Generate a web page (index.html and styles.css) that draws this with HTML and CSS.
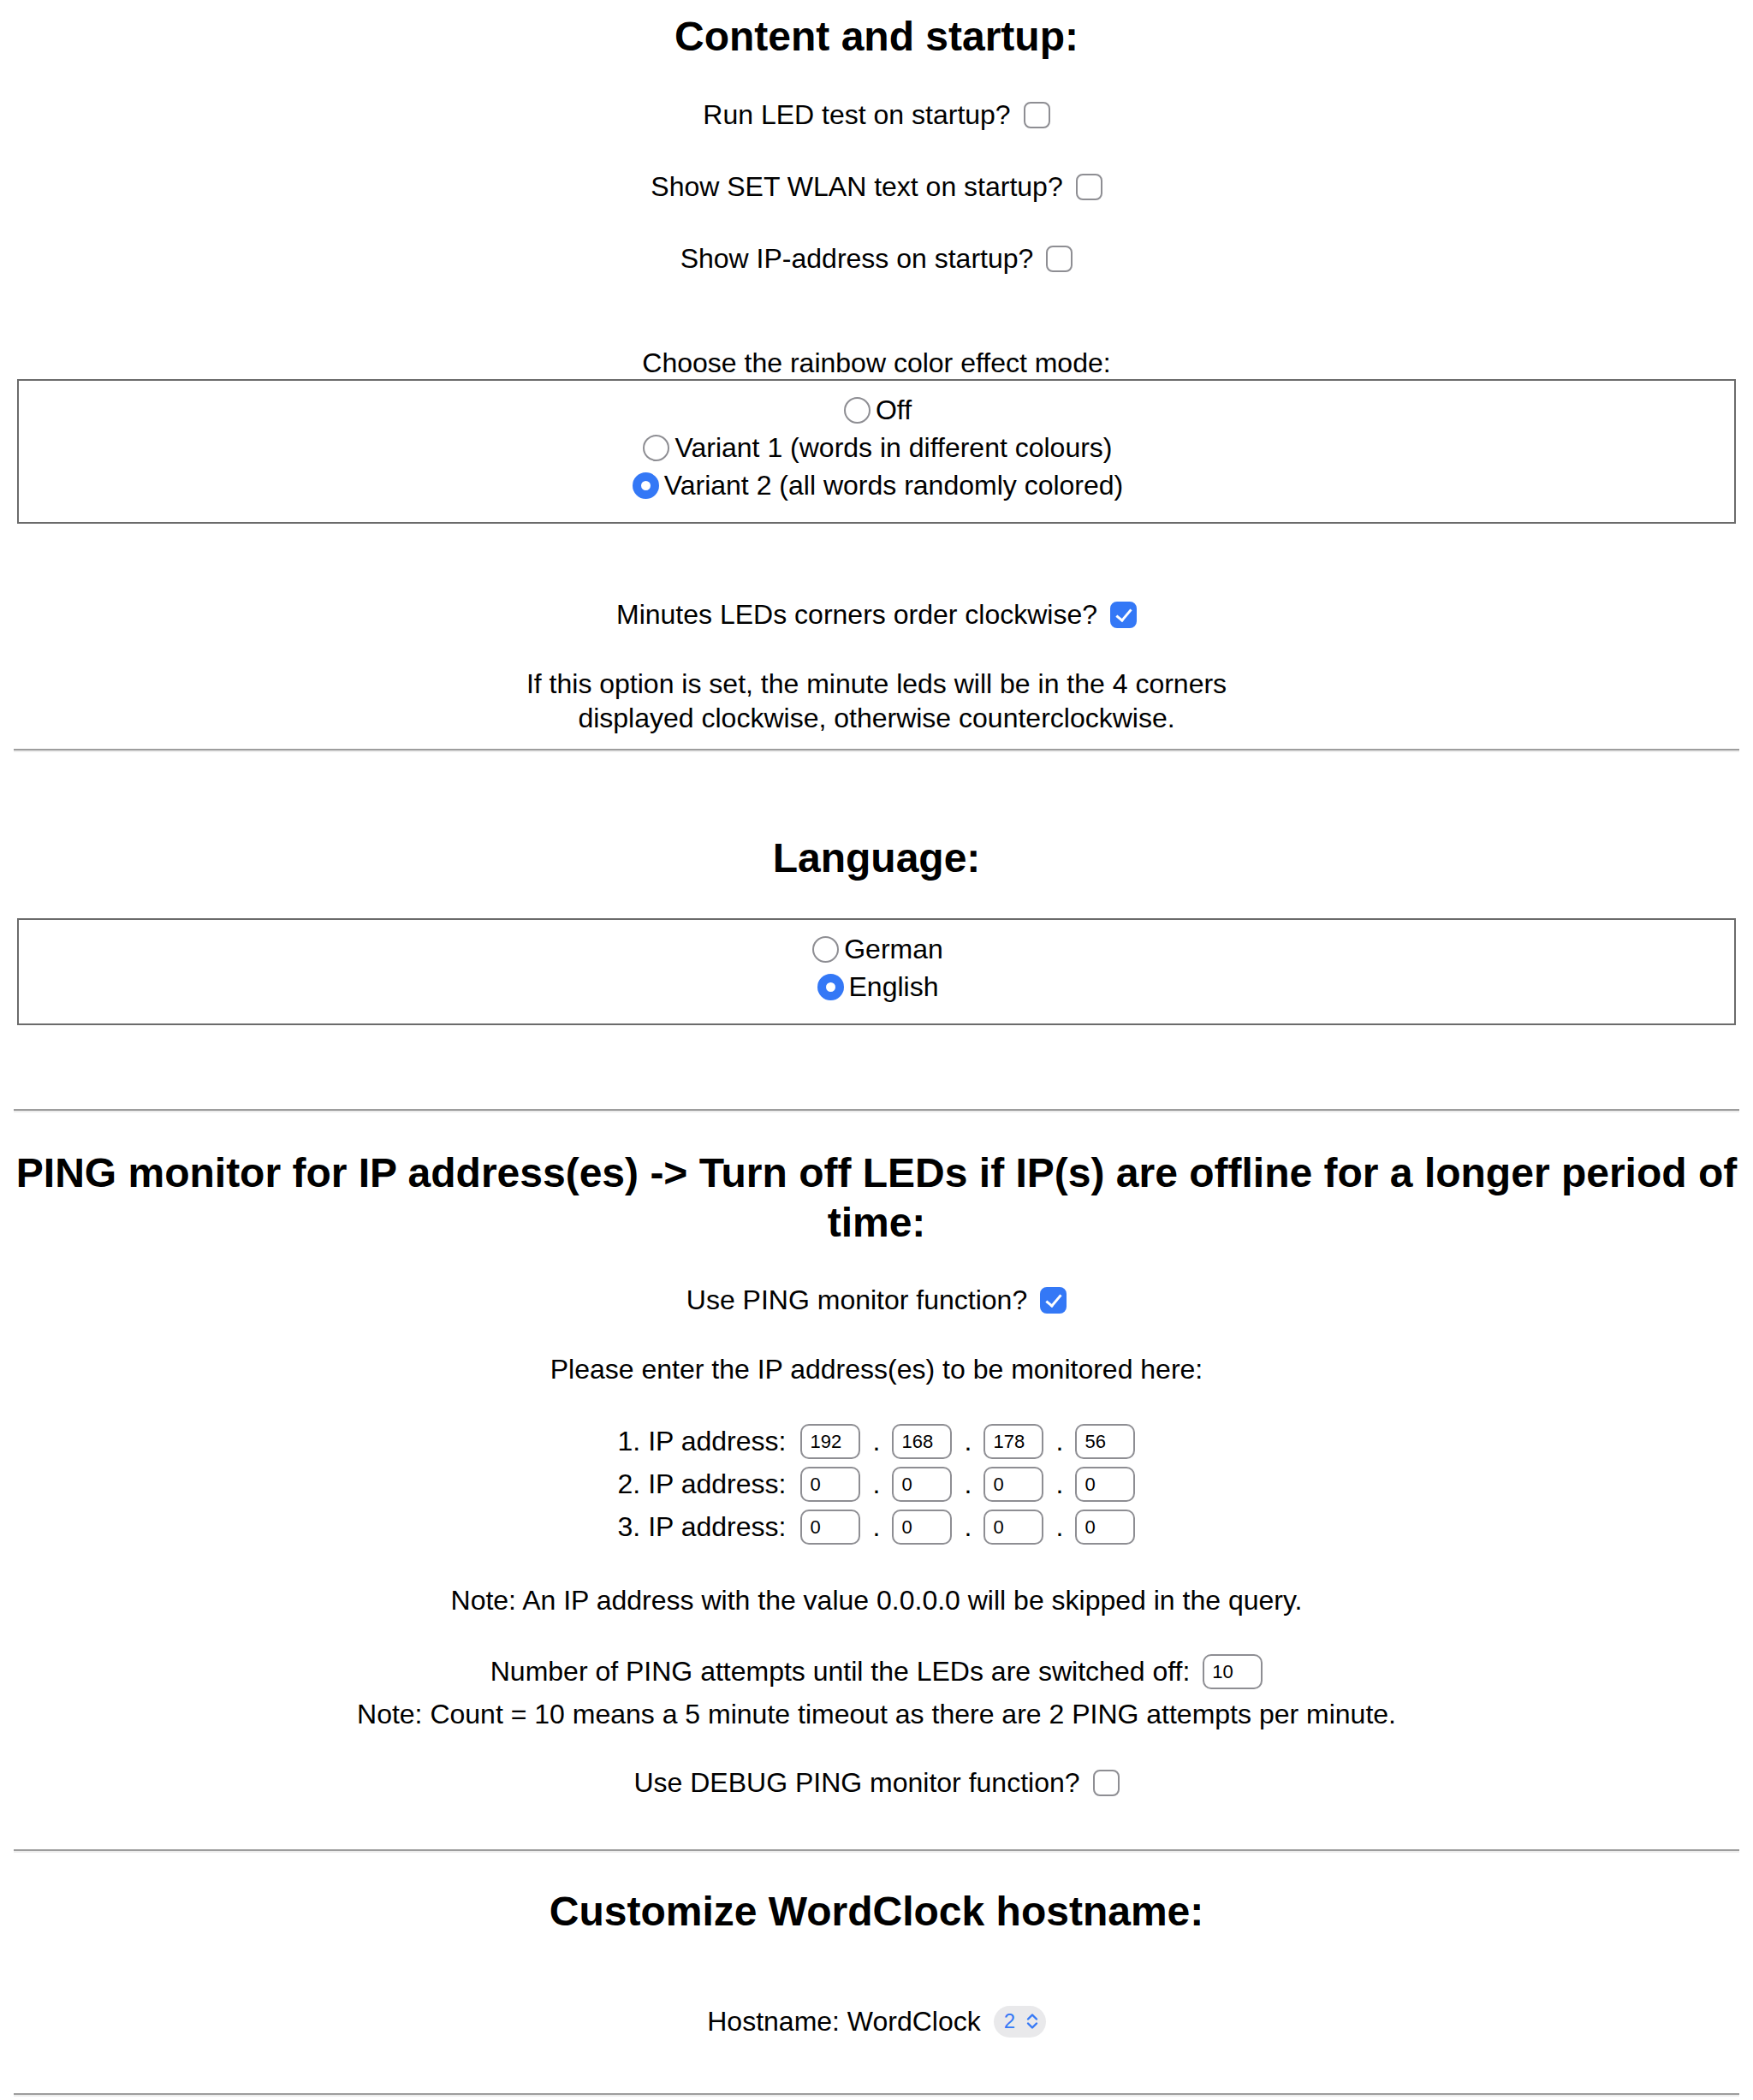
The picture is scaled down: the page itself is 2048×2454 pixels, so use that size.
FILE: index.html
```html
<!DOCTYPE html>
<html lang="en">
<head>
<meta charset="utf-8">
<title>WordClock settings</title>
<link rel="stylesheet" href="styles.css">
</head>
<body>
<main class="page">
  <h2 class="title t-content">Content and startup:</h2>
  <label class="row r-led">Run LED test on startup? <input type="checkbox" class="cb"></label>
  <label class="row r-gap44">Show SET WLAN text on startup? <input type="checkbox" class="cb"></label>
  <label class="row r-gap44">Show IP-address on startup? <input type="checkbox" class="cb"></label>

  <div class="caption">Choose the rainbow color effect mode:</div>
  <fieldset class="group g-rainbow">
    <label class="radio-row"><input type="radio" name="rb" class="rd">Off</label>
    <label class="radio-row"><input type="radio" name="rb" class="rd">Variant 1 (words in different colours)</label>
    <label class="radio-row"><input type="radio" name="rb" class="rd" checked>Variant 2 (all words randomly colored)</label>
  </fieldset>

  <label class="row r-minutes">Minutes LEDs corners order clockwise? <input type="checkbox" class="cb" checked></label>
  <p class="note n-minutes">If this option is set, the minute leds will be in the 4 corners<br>displayed clockwise, otherwise counterclockwise.</p>
  <hr class="sep s-1">

  <h2 class="title t-lang">Language:</h2>
  <fieldset class="group g-lang">
    <label class="radio-row"><input type="radio" name="lang" class="rd">German</label>
    <label class="radio-row"><input type="radio" name="lang" class="rd" checked>English</label>
  </fieldset>
  <hr class="sep s-2">

  <h2 class="title t-ping">PING monitor for IP address(es) -&gt; Turn off LEDs if IP(s) are offline for a longer period of time:</h2>
  <label class="row r-ping">Use PING monitor function? <input type="checkbox" class="cb" checked></label>
  <p class="note n-please">Please enter the IP address(es) to be monitored here:</p>

  <div class="ip-list">
    <div class="ip-row">
      <span class="ip-label">1. IP address:</span>
      <input class="ip" type="text" value="192"><span class="dot">.</span>
      <input class="ip" type="text" value="168"><span class="dot">.</span>
      <input class="ip" type="text" value="178"><span class="dot">.</span>
      <input class="ip" type="text" value="56">
    </div>
    <div class="ip-row">
      <span class="ip-label">2. IP address:</span>
      <input class="ip" type="text" value="0"><span class="dot">.</span>
      <input class="ip" type="text" value="0"><span class="dot">.</span>
      <input class="ip" type="text" value="0"><span class="dot">.</span>
      <input class="ip" type="text" value="0">
    </div>
    <div class="ip-row">
      <span class="ip-label">3. IP address:</span>
      <input class="ip" type="text" value="0"><span class="dot">.</span>
      <input class="ip" type="text" value="0"><span class="dot">.</span>
      <input class="ip" type="text" value="0"><span class="dot">.</span>
      <input class="ip" type="text" value="0">
    </div>
  </div>

  <p class="note n-skip">Note: An IP address with the value 0.0.0.0 will be skipped in the query.</p>
  <label class="row r-count">Number of PING attempts until the LEDs are switched off: <input class="ip" type="text" value="10"></label>
  <p class="note n-count">Note: Count = 10 means a 5 minute timeout as there are 2 PING attempts per minute.</p>
  <label class="row r-debug">Use DEBUG PING monitor function? <input type="checkbox" class="cb"></label>
  <hr class="sep s-3">

  <h2 class="title t-host">Customize WordClock hostname:</h2>
  <div class="row r-host">
    <span>Hostname: WordClock</span>
    <span class="select"><span class="select-val">2</span><svg class="chev" viewBox="0 0 14 20" width="14" height="20"><path d="M2 7.5 L7 2.5 L12 7.5 M2 12.5 L7 17.5 L12 12.5" fill="none" stroke="#3478f6" stroke-width="2.4" stroke-linecap="round" stroke-linejoin="round"/></svg></span>
  </div>
  <hr class="sep s-4">
</main>
</body>
</html>
```

FILE: styles.css
```css
html, body {
  margin: 0;
  background: #ffffff;
}

body {
  padding: 0 16px 40px;
  font-family: "Liberation Sans", Arial, Helvetica, sans-serif;
  font-size: 32px;
  line-height: 40px;
  color: #000000;
  text-align: center;
}

.page {
  display: flex;
  flex-direction: column;
}

.title {
  margin: 0;
  font-size: 48px;
  line-height: 58px;
  font-weight: bold;
}

.row {
  display: flex;
  justify-content: center;
  align-items: center;
  gap: 15px;
  height: 40px;
}

.caption {
  height: 38px;
  line-height: 38px;
  margin-top: 83px;
}

.note {
  margin: 0;
}

/* checkbox */
.cb {
  appearance: none;
  -webkit-appearance: none;
  position: relative;
  width: 31px;
  height: 31px;
  margin: 0;
  border: 2.5px solid #8e8e93;
  border-radius: 8px;
  background: #ffffff;
  box-sizing: border-box;
  flex: none;
}

.cb:checked {
  border-color: #3478f6;
  background: #3478f6;
}

.cb:checked::after {
  content: "";
  position: absolute;
  left: 9px;
  top: 3px;
  width: 7px;
  height: 15px;
  border-right: 3.5px solid #ffffff;
  border-bottom: 3.5px solid #ffffff;
  transform: rotate(40deg);
}

/* radio */
.group {
  margin: 0 4px;
  min-width: 0;
  border: 2px solid #6b6b6b;
  padding: 12px 24px 21px;
}

.radio-row {
  display: flex;
  justify-content: center;
  align-items: center;
  height: 44px;
}

.rd {
  appearance: none;
  -webkit-appearance: none;
  width: 31px;
  height: 31px;
  margin: 0 6px 0 3px;
  border: 2.5px solid #8e8e93;
  border-radius: 50%;
  background: #ffffff;
  box-sizing: border-box;
  flex: none;
}

.rd:checked {
  border: 10px solid #3478f6;
}

/* separators */
.sep {
  height: 0;
  margin: 0;
  border: none;
  border-top: 2px solid #9d9d9d;
  border-bottom: 2px solid #ededed;
}

/* ip inputs */
.ip-list {
  display: flex;
  flex-direction: column;
  margin-top: 39px;
}

.ip-row {
  display: flex;
  justify-content: center;
  align-items: center;
  height: 50px;
}

.ip-label {
  margin-right: 17px;
}

.ip {
  width: 70px;
  height: 41px;
  margin: 0;
  padding: 2px 0 0 9px;
  box-sizing: border-box;
  border: 2px solid #8e8e93;
  border-radius: 10px;
  font-family: "Liberation Sans", Arial, Helvetica, sans-serif;
  font-size: 22px;
  color: #000000;
  background: #ffffff;
  text-align: left;
  flex: none;
}

.dot {
  display: inline-block;
  width: 37px;
  text-align: center;
}

/* select */
.select {
  display: inline-flex;
  align-items: center;
  gap: 13px;
  width: 61px;
  height: 37px;
  box-sizing: border-box;
  padding-left: 12px;
  border-radius: 19px;
  background: #e9e9eb;
  color: #3478f6;
  font-size: 24px;
  line-height: 24px;
}

.chev {
  display: block;
}

/* vertical rhythm */
.t-content { margin-top: 14px; }
.r-led { margin-top: 42px; }
.r-gap44 { margin-top: 44px; }
.g-rainbow { margin-top: 0; }
.r-minutes { margin-top: 86px; }
.n-minutes { margin-top: 41px; }
.s-1 { margin-top: 16px; }
.t-lang { margin-top: 95px; }
.g-lang { margin-top: 41px; }
.s-2 { margin-top: 98px; }
.t-ping { margin-top: 42px; }
.r-ping { margin-top: 41px; }
.n-please { margin-top: 41px; }
.n-skip { margin-top: 41px; }
.r-count { margin-top: 38px; height: 50px; }
.n-count { margin-top: 5px; }
.r-debug { margin-top: 40px; }
.s-3 { margin-top: 58px; }
.t-host { margin-top: 40px; }
.r-host { margin-top: 79px; }
.s-4 { margin-top: 64px; }
```
